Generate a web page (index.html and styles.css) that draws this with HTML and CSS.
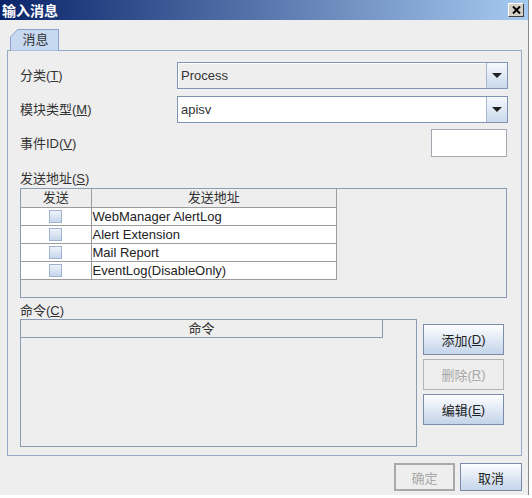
FILE: index.html
```html
<!DOCTYPE html>
<html lang="zh">
<head>
<meta charset="utf-8">
<title>输入消息</title>
<link rel="stylesheet" href="styles.css">
</head>
<body>
<div class="window">
  <div class="titlebar">
    <span class="title">输入消息</span>
    <span class="close">
      <svg width="9" height="8" viewBox="0 0 9 8"><path d="M1 0.5 L8 7.5 M8 0.5 L1 7.5" stroke="#000" stroke-width="2"/></svg>
    </span>
  </div>
  <div class="content">
    <div class="tabs">
      <div class="tab">
        <svg class="tab-shape" width="49" height="22" viewBox="0 0 49 22"><polygon points="0.5,22 0.5,8 7.5,0.5 48.5,0.5 48.5,22" fill="#c6d9f1" stroke="#8aa4cc" stroke-width="1"/></svg>
        <span class="tab-label">消息</span>
      </div>
    </div>
    <div class="panel">
      <div class="form">
        <div class="label">分类(<u>T</u>)</div>
        <div class="combo combo-ro">
          <div class="combo-text">Process</div>
          <div class="combo-btn"><span class="tri"></span></div>
        </div>
        <div class="label">模块类型(<u>M</u>)</div>
        <div class="combo combo-ed">
          <div class="combo-text">apisv</div>
          <div class="combo-btn"><span class="tri"></span></div>
        </div>
        <div class="label">事件ID(<u>V</u>)</div>
        <div class="textfield"></div>
      </div>
      <div class="section-label first">发送地址(<u>S</u>)</div>
      <div class="pane dest-pane">
        <table class="dest">
          <thead>
            <tr><th class="c1">发送</th><th class="c2">发送地址</th></tr>
          </thead>
          <tbody>
            <tr><td class="c1"><span class="check"></span></td><td class="c2">WebManager AlertLog</td></tr>
            <tr><td class="c1"><span class="check"></span></td><td class="c2">Alert Extension</td></tr>
            <tr><td class="c1"><span class="check"></span></td><td class="c2">Mail Report</td></tr>
            <tr><td class="c1"><span class="check"></span></td><td class="c2">EventLog(DisableOnly)</td></tr>
          </tbody>
        </table>
      </div>
      <div class="section-label second">命令(<u>C</u>)</div>
      <div class="cmd-row">
        <div class="pane cmd-pane">
          <div class="cmd-header">命令</div>
        </div>
        <div class="cmd-buttons">
          <div class="btn">添加(<u>D</u>)</div>
          <div class="btn disabled">删除(<u>R</u>)</div>
          <div class="btn">编辑(<u>E</u>)</div>
        </div>
      </div>
    </div>
    <div class="footer">
      <div class="btn fbtn ok">确定</div>
      <div class="btn fbtn cancel">取消</div>
    </div>
  </div>
</div>
</body>
</html>
```
FILE: styles.css
```css
* { box-sizing: border-box; }
html, body { margin: 0; padding: 0; background: #ffffff; }
body {
  font-family: "Liberation Sans", "Noto Sans CJK SC", sans-serif;
  font-size: 13px;
  color: #333333;
}
u { text-decoration: underline; text-underline-offset: 1px; }

.window {
  width: 529px;
  height: 495px;
  background: #eeeeee;
  border-right: 1px solid #8a8a8a;
  display: flex;
  flex-direction: column;
}

.titlebar {
  height: 20px;
  flex: none;
  display: flex;
  align-items: center;
  justify-content: space-between;
  padding: 0 4px 0 2px;
  background: linear-gradient(to right, #0a246a, #a6caf0);
}
.title {
  color: #ffffff;
  font-weight: bold;
  font-size: 14px;
  line-height: 20px;
  font-family: "Noto Sans CJK SC", sans-serif;
}
.close {
  width: 16px;
  height: 14px;
  background: #d4d0c8;
  border-top: 1px solid #ffffff;
  border-left: 1px solid #ffffff;
  border-right: 1px solid #404040;
  border-bottom: 1px solid #404040;
  display: flex;
  align-items: center;
  justify-content: center;
}
.close svg { display: block; }

.content {
  flex: 1;
  padding: 9px 6px 0 7px;
  display: flex;
  flex-direction: column;
}

.tabs {
  height: 22px;
  padding-left: 3px;
  margin-bottom: -1px;
  position: relative;
  z-index: 1;
}
.tab {
  position: relative;
  width: 49px;
  height: 22px;
  display: flex;
  align-items: center;
  justify-content: center;
}
.tab-shape { position: absolute; left: 0; top: 0; }
.tab-label {
  position: relative;
  font-size: 13px;
  color: #333;
  padding-left: 2px;
  line-height: 16px;
}

.panel {
  width: 515px;
  height: 406px;
  border: 1px solid #95a9c9;
  padding: 11px 13px 8px 12px;
  display: flex;
  flex-direction: column;
}

.form {
  display: grid;
  grid-template-columns: 157px 331px;
  grid-template-rows: 27px 27px 28px;
  row-gap: 7px;
}
.form .label {
  align-self: center;
  line-height: 16px;
}
.form .textfield { margin-top: -1px; }

.combo {
  height: 27px;
  border: 1px solid #7f95b6;
  display: flex;
}
.combo-ro { background: #eeeeee; box-shadow: inset 1px 1px 0 #ffffff; }
.combo-ed { background: #ffffff; }
.combo-text {
  flex: 1;
  padding-left: 3px;
  line-height: 25px;
  font-size: 13px;
  color: #333;
}
.combo-btn {
  width: 21px;
  border-left: 1px solid #a9b8cf;
  background: linear-gradient(to bottom, #f6f9fd, #c9d8ec);
  display: flex;
  align-items: center;
  justify-content: center;
}
.tri {
  width: 0;
  height: 0;
  border-left: 5px solid transparent;
  border-right: 5px solid transparent;
  border-top: 5px solid #222;
}

.textfield {
  justify-self: end;
  width: 76px;
  height: 28px;
  background: #ffffff;
  border: 1px solid #a2a8b2;
  margin-right: 1px;
}

.section-label { line-height: 16px; }
.section-label.first { margin-top: 13px; margin-bottom: 1px; }
.section-label.second { margin-top: 5px; }

.pane {
  border: 1px solid #8b9bb4;
  background: #eeeeee;
}
.dest-pane {
  width: 487px;
  height: 110px;
}
.dest {
  border-collapse: collapse;
  width: 316px;
  table-layout: fixed;
}
.dest th, .dest td {
  height: 18px;
  padding: 0;
  border-right: 1px solid #9c9c9c;
  border-bottom: 1px solid #9c9c9c;
  font-size: 13px;
  line-height: 17px;
}
.dest th {
  background: #eeeeee;
  font-weight: normal;
  text-align: center;
  color: #333;
}
.dest th.c1, .dest td.c1 { width: 70px; }
.dest td { background: #ffffff; color: #222; }
.dest td.c2 { padding-left: 1px; white-space: nowrap; }
.dest td.c1 { text-align: center; }
.check {
  display: inline-block;
  width: 13px;
  height: 13px;
  vertical-align: middle;
  margin-top: -2px;
  border: 1px solid #9fb2cf;
  background: linear-gradient(to bottom, #eef3fa, #c6d6ec);
}

.cmd-row {
  display: flex;
  margin-top: 0;
}
.cmd-pane {
  width: 397px;
  height: 128px;
}
.cmd-header {
  width: 362px;
  height: 18px;
  border-right: 1px solid #8b9bb4;
  border-bottom: 1px solid #8b9bb4;
  text-align: center;
  line-height: 17px;
  color: #333;
}
.cmd-buttons {
  margin-left: 6px;
  margin-top: 5px;
  display: flex;
  flex-direction: column;
  gap: 4px;
}

.btn {
  width: 81px;
  height: 31px;
  border: 1px solid #7a8ca9;
  background: linear-gradient(to bottom, #fdfeff, #c3d4ea);
  display: flex;
  align-items: center;
  justify-content: center;
  font-size: 13px;
  color: #222;
}
.btn.disabled {
  background: #eeeeee;
  border-color: #b4b4b4;
  color: #a8a8a8;
}

.footer {
  margin-top: 7px;
  display: flex;
  justify-content: flex-end;
  gap: 5px;
  padding-right: 0;
}
.fbtn { height: 28px; }
.fbtn.ok {
  width: 61px;
  background: #eeeeee;
  border: 2px solid #a9a9a9;
  color: #a8a8a8;
}
.fbtn.cancel { width: 62px; }
```
